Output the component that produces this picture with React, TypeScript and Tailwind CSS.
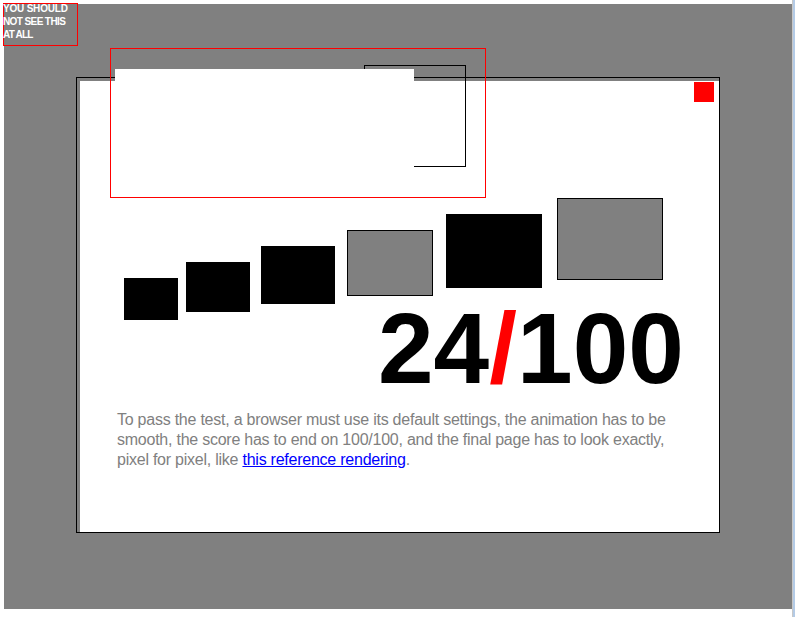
import React from "react";

export default function App() {
  return (
    <div className="relative w-[798px] h-[617px] bg-white overflow-hidden font-['Liberation_Sans',Arial,sans-serif]">
      <div className="pt-[4px] pl-[4px]">
        <div className="w-[788px] h-[605px] bg-[#808080] pt-[73px] pl-[72px]">
          <div className="w-[644px] h-[456px] border border-black bg-[#808080] pt-[3px] pl-[3px]">
            <div className="w-[639px] h-[451px] bg-white pt-[117px]">
              <div className="ml-[44px] flex items-start">
                <div className="mt-[80px] w-[54px] h-[42px] bg-black" />
                <div className="ml-[8px] mt-[64px] w-[64px] h-[50px] bg-black" />
                <div className="ml-[11px] mt-[48px] w-[74px] h-[58px] bg-black" />
                <div className="ml-[12px] mt-[32px] w-[86px] h-[66px] bg-[#808080] border border-black" />
                <div className="ml-[13px] mt-[16px] w-[96px] h-[74px] bg-black" />
                <div className="ml-[15px] w-[106px] h-[82px] bg-[#808080] border border-black" />
              </div>
              <div className="-mt-[22px] ml-[298px] text-[100px] leading-none font-bold text-black whitespace-nowrap">
                24<span className="text-[#ff0000]">/</span>100
              </div>
              <p className="mt-[12px] ml-[37px] text-[16px] leading-[20px] tracking-[-0.24px] text-[#808080] whitespace-nowrap">
                To pass the test, a browser must use its default settings, the animation has to be
                <br />
                smooth, the score has to end on 100/100, and the final page has to look exactly,
                <br />
                pixel for pixel, like{" "}
                <a href="#" className="text-[#0000ff] underline">
                  this reference rendering
                </a>
                .
              </p>
            </div>
          </div>
        </div>
      </div>

      {/* overlays */}
      <div className="absolute left-[364px] top-[65px] w-[102px] h-[102px] border border-black" />
      <div className="absolute left-[115px] top-[69px] w-[299px] h-[100px] bg-white" />
      <div className="absolute left-[110px] top-[48px] w-[376px] h-[150px] border border-[#ff0000]" />
      <div className="absolute left-[694px] top-[82px] w-[20px] h-[20px] bg-[#ff0000]" />

      <div className="absolute left-[3px] top-[3px] w-[75px] h-[43px] bg-[#ff0000] p-[1px]">
        <div className="w-full h-full bg-[#808080]" />
      </div>
      <div className="absolute left-[3px] top-[2px] text-[10px] leading-[13px] font-bold text-white whitespace-nowrap flex flex-col">
        <span className="tracking-[-0.2px]">YOU SHOULD</span>
        <span className="tracking-[-0.6px]">NOT SEE THIS</span>
        <span className="tracking-[-0.8px]">AT ALL</span>
      </div>

      <div className="absolute left-[792px] top-0 w-[1px] h-full bg-[#c8c8c8]" />
      <div className="absolute left-[793px] top-0 w-[2px] h-full bg-[#b4cbe6]" />
    </div>
  );
}
